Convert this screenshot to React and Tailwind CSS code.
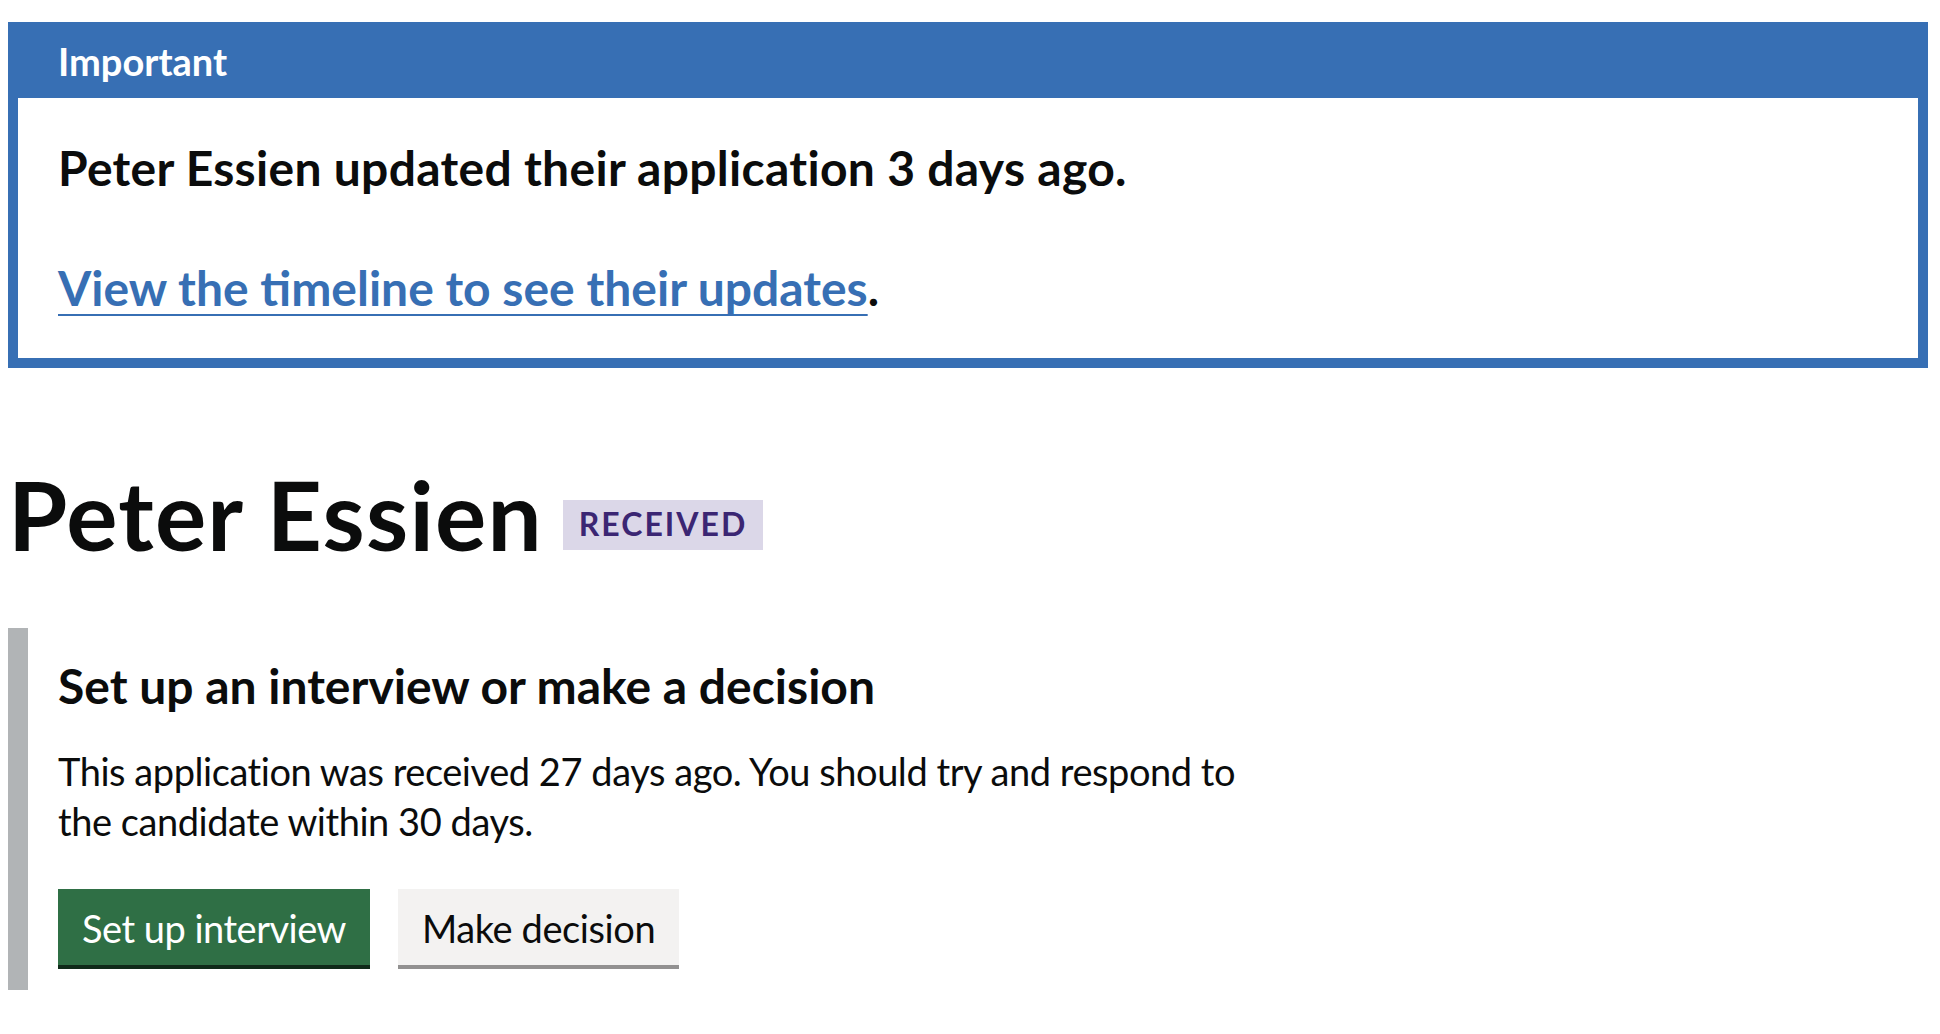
import React from 'react';

const font = { fontFamily: 'Lato, "Liberation Sans", sans-serif' };

const NotificationBanner = () => (
  <div className="border-[10px] border-[#376fb4] bg-[#376fb4]">
    <div className="px-[40px] pt-[4px] pb-[12px]">
      <h2 className="text-[38px] leading-[50px] font-bold text-white">Important</h2>
    </div>
    <div className="bg-white p-[40px]">
      <p className="text-[48px] leading-[60px] font-bold tracking-[0.3px] text-[#0b0c0c] mb-[60px]">
        Peter Essien updated their application 3 days ago.
      </p>
      <p className="text-[48px] leading-[60px] font-bold text-[#0b0c0c]">
        <a
          href="#"
          className="text-[#376fb4] underline decoration-[2px] underline-offset-[8px]"
        >
          View the timeline to see their updates
        </a>
        .
      </p>
    </div>
  </div>
);

const App = () => {
  return (
    <div className="min-h-screen bg-white pl-2 pr-[12px] pt-[22px] pb-10 text-[#0b0c0c]" style={font}>
      <NotificationBanner />

      <div className="flex items-start mt-[96px]">
        <h1 className="text-[96px] leading-[100px] font-bold tracking-[1.2px]">Peter Essien</h1>
        <strong className="ml-[20px] mt-[36px] bg-[#dbd7e8] text-[#3b2673] text-[32px] leading-[40px] font-bold tracking-[2px] px-[16px] pt-[4px] pb-[6px]">
          RECEIVED
        </strong>
      </div>

      <div className="mt-[64px] max-w-[1280px] border-l-[20px] border-[#b1b4b6] pl-[30px] pr-[30px] pt-[28px] pb-[25px]">
        <h2 className="text-[48px] leading-[60px] font-bold mb-[30px]">
          Set up an interview or make a decision
        </h2>
        <p className="text-[38px] leading-[50px] tracking-[-0.45px] mb-[43px]">
          This application was received 27 days ago. You should try and respond to the candidate within 30 days.
        </p>
        <div className="flex gap-[28px]">
          <button className="bg-[#2f6f45] text-white text-[38px] leading-[45px] tracking-[-0.5px] border-4 border-transparent px-[20px] pt-[13px] pb-[10px] shadow-[0_4px_0_#0f2a19]">
            Set up interview
          </button>
          <button className="bg-[#f3f2f1] text-[#0b0c0c] text-[38px] leading-[45px] tracking-[-0.4px] border-4 border-transparent px-[20px] pt-[13px] pb-[10px] shadow-[0_4px_0_#929191]">
            Make decision
          </button>
        </div>
      </div>
    </div>
  );
};

export default App;
